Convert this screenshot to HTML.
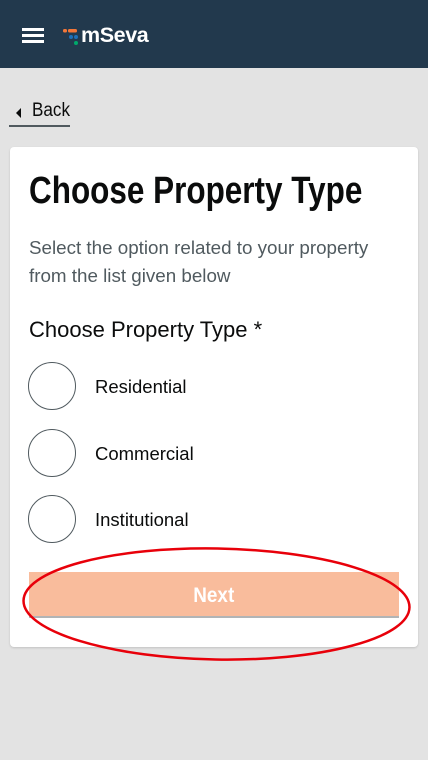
<!DOCTYPE html>
<html><head><meta charset="utf-8"><style>
*{margin:0;padding:0;box-sizing:border-box}
body{width:428px;height:760px;background:#e3e3e3;font-family:"Liberation Sans",sans-serif;position:relative;overflow:hidden}
.hdr{position:absolute;left:0;top:0;width:428px;height:68px;background:#22394d}
.ham{position:absolute;left:22px;width:22px;height:2.5px;background:#fff}
.a{position:absolute;white-space:nowrap}
.sx{display:inline-block;transform-origin:left center}
.card{position:absolute;left:10px;top:147px;width:408px;height:500px;background:#fff;border-radius:4px;box-shadow:0 1px 2px rgba(0,0,0,.15)}
.rad{position:absolute;left:28px;width:48px;height:48px;border:1px solid #505a5f;border-radius:50%;background:#fff}
.lbl{position:absolute;left:95px;font-size:18.5px;color:#0b0c0c}
</style></head><body>
<div class="hdr">
 <div class="ham" style="top:28px"></div>
 <div class="ham" style="top:34px"></div>
 <div class="ham" style="top:40px"></div>
 <svg style="position:absolute;left:62px;top:28px" width="16" height="18" viewBox="0 0 16 18">
  <rect x="1" y="1" width="4" height="3.5" rx="1.5" fill="#f47738"/>
  <rect x="6" y="1" width="9" height="3.5" rx="1.5" fill="#f47738"/>
  <circle cx="9" cy="9" r="2" fill="#1d70b8"/><circle cx="14" cy="9" r="2" fill="#1d70b8"/>
  <circle cx="14" cy="15" r="2" fill="#00a86b"/>
 </svg>
 <div class="a" style="left:81px;top:23px;font-size:21.5px;font-weight:bold;color:#fff;letter-spacing:-0.4px">mSeva</div>
</div>
<svg style="position:absolute;left:16px;top:108px" width="6" height="10"><path d="M5 0 L0 5 L5 10Z" fill="#0b0c0c"/></svg>
<div class="a" style="left:32px;top:100px;font-size:19px;color:#0b0c0c"><span class="sx" style="transform:scaleX(0.9)">Back</span></div>
<div style="position:absolute;left:9px;top:125px;width:61px;height:2px;background:#505a5f"></div>
<div class="card"></div>
<div class="a" style="left:29px;top:170px;font-size:38px;font-weight:bold;color:#0b0c0c"><span class="sx" style="transform:scaleX(0.828)">Choose Property Type</span></div>
<div class="a" style="left:29px;top:234px;font-size:18.8px;line-height:28px;color:#505a5f">Select the option related to your property<br>from the list given below</div>
<div class="a" style="left:29px;top:317px;font-size:22px;color:#0b0c0c">Choose Property Type *</div>
<div class="rad" style="top:362px"></div><div class="lbl" style="top:376px">Residential</div>
<div class="rad" style="top:429px"></div><div class="lbl" style="top:443px">Commercial</div>
<div class="rad" style="top:495px"></div><div class="lbl" style="top:509px">Institutional</div>
<div style="position:absolute;left:29px;top:572px;width:370px;height:46px;background:#f9bc9c;border-bottom:2px solid #b1b4b6"></div>
<div class="a" style="left:0;width:428px;text-align:center;top:584px;font-size:21px;font-weight:bold;color:#fff"><span class="sx" style="transform:scaleX(0.9);transform-origin:center">Next</span></div>
<svg style="position:absolute;left:0;top:0" width="428" height="760"><ellipse cx="216.5" cy="604" rx="193" ry="55.5" fill="none" stroke="#e8000a" stroke-width="2.5" transform="rotate(1 216 604)"/></svg>
</body></html>
